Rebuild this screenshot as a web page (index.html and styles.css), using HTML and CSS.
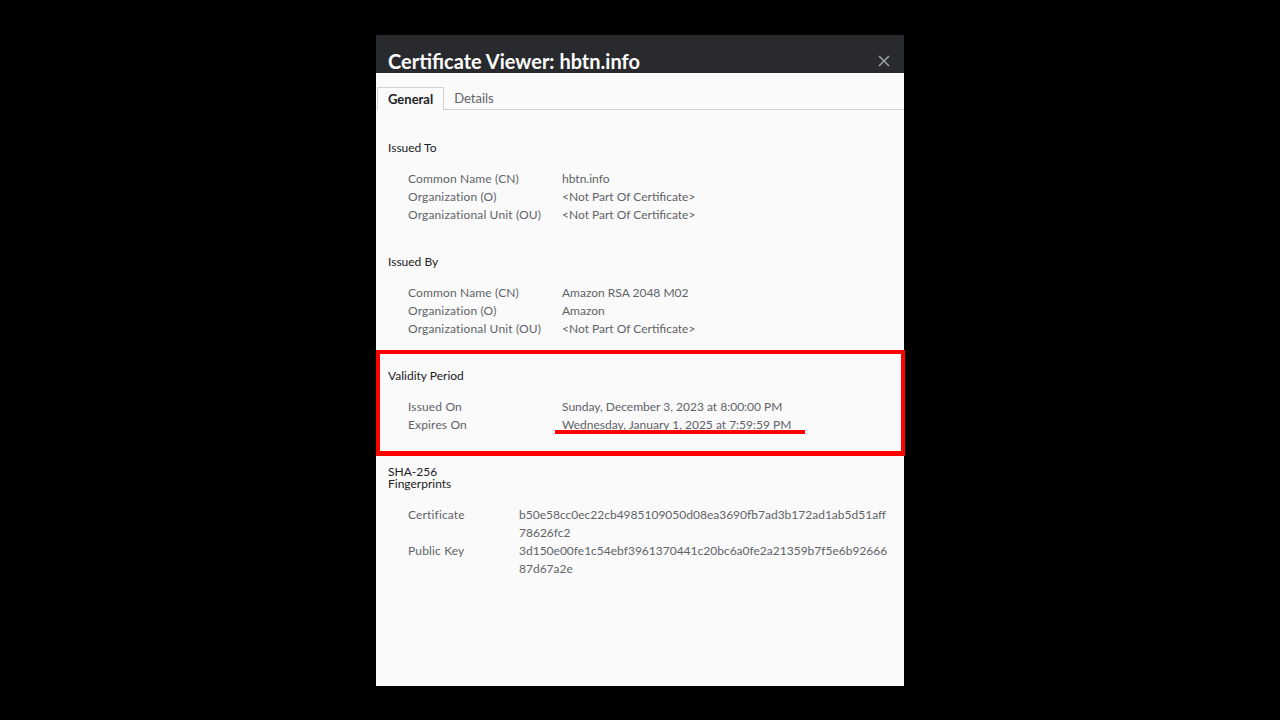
FILE: index.html
```html
<!DOCTYPE html>
<html>
<head>
<meta charset="utf-8">
<link rel="stylesheet" href="styles.css">
</head>
<body>
<div class="dialog">
  <div class="header">
    <span class="title">Certificate Viewer: hbtn.info</span>
    <svg class="close" width="12" height="12" viewBox="0 0 12 12"><path d="M1 1L11 11M11 1L1 11" stroke="#9aa0a6" stroke-width="1.6"/></svg>
  </div>
  <div class="tabs">
    <div class="tab active">General</div>
    <div class="tab">Details</div>
    <div class="tabfill"></div>
  </div>
  <div class="content">
    <section class="sec">
      <div class="heading">Issued To</div>
      <div class="rows">
        <div class="row"><span class="lbl">Common Name (CN)</span><span class="val">hbtn.info</span></div>
        <div class="row"><span class="lbl">Organization (O)</span><span class="val">&lt;Not Part Of Certificate&gt;</span></div>
        <div class="row"><span class="lbl">Organizational Unit (OU)</span><span class="val">&lt;Not Part Of Certificate&gt;</span></div>
      </div>
    </section>
    <section class="sec">
      <div class="heading">Issued By</div>
      <div class="rows">
        <div class="row"><span class="lbl">Common Name (CN)</span><span class="val">Amazon RSA 2048 M02</span></div>
        <div class="row"><span class="lbl">Organization (O)</span><span class="val">Amazon</span></div>
        <div class="row"><span class="lbl">Organizational Unit (OU)</span><span class="val">&lt;Not Part Of Certificate&gt;</span></div>
      </div>
    </section>
    <section class="sec">
      <div class="heading">Validity Period</div>
      <div class="rows">
        <div class="row"><span class="lbl">Issued On</span><span class="val">Sunday, December 3, 2023 at 8:00:00 PM</span></div>
        <div class="row"><span class="lbl">Expires On</span><span class="val">Wednesday, January 1, 2025 at 7:59:59 PM</span></div>
      </div>
    </section>
    <section class="sec">
      <div class="heading narrow">SHA-256 Fingerprints</div>
      <div class="rows">
        <div class="row fp"><span class="lbl">Certificate</span><span class="val">b50e58cc0ec22cb4985109050d08ea3690fb7ad3b172ad1ab5d51aff<br>78626fc2</span></div>
        <div class="row fp"><span class="lbl">Public Key</span><span class="val">3d150e00fe1c54ebf3961370441c20bc6a0fe2a21359b7f5e6b92666<br>87d67a2e</span></div>
      </div>
    </section>
  </div>
  <div class="redbox"></div>
  <div class="underline"></div>
</div>
</body>
</html>
```
FILE: styles.css
```css
html, body {
  margin: 0;
  padding: 0;
  background: #000;
}
body {
  padding-top: 35px;
  height: 685px;
  font-family: "Lato", "Noto Sans", sans-serif;
}
.dialog {
  position: relative;
  width: 528px;
  height: 651px;
  margin: 0 auto;
  background: #fafafa;
  display: flex;
  flex-direction: column;
}
.header {
  height: 38px;
  background: #292a2d;
  overflow: hidden;
  display: flex;
  align-items: flex-start;
  padding-left: 12px;
  position: relative;
}
.title {
  color: #fff;
  font-size: 20px;
  font-weight: bold;
  line-height: 22px;
  margin-top: 15px;
  white-space: nowrap;
}
.close {
  position: absolute;
  right: 14px;
  top: 20px;
}
.tabs {
  display: flex;
  margin-top: 14px;
  padding-left: 1px;
  height: 23px;
}
.tab {
  font-size: 13px;
  line-height: 22px;
  padding: 0 10px;
  color: #5f6368;
  border-bottom: 1px solid #d0d0d0;
}
.tab.active {
  color: #202124;
  font-weight: bold;
  border: 1px solid #d0d0d0;
  border-bottom: none;
  line-height: 22px;
}
.tabfill {
  flex: 1;
  border-bottom: 1px solid #d0d0d0;
}
.content {
  padding: 32px 12px 0 12px;
  display: flex;
  flex-direction: column;
  gap: 32px;
}
.heading {
  font-size: 12px;
  line-height: 12px;
  color: #202124;
  margin-bottom: 16px;
}
.heading.narrow {
  width: 70px;
}
.rows {
  padding-left: 20px;
}
.row {
  display: grid;
  grid-template-columns: 154px 1fr;
  font-size: 12px;
  line-height: 18px;
  color: #5f6368;
}
.lbl {
  letter-spacing: 0.15px;
}
.row.fp {
  grid-template-columns: 111px 1fr;
}
.redbox {
  position: absolute;
  left: 0;
  top: 315px;
  width: 521px;
  height: 97px;
  border: 4px solid #ff0000;
  border-bottom-width: 5px;
}
.underline {
  position: absolute;
  left: 179px;
  top: 395px;
  width: 250px;
  height: 4px;
  background: #ff0000;
}
```
